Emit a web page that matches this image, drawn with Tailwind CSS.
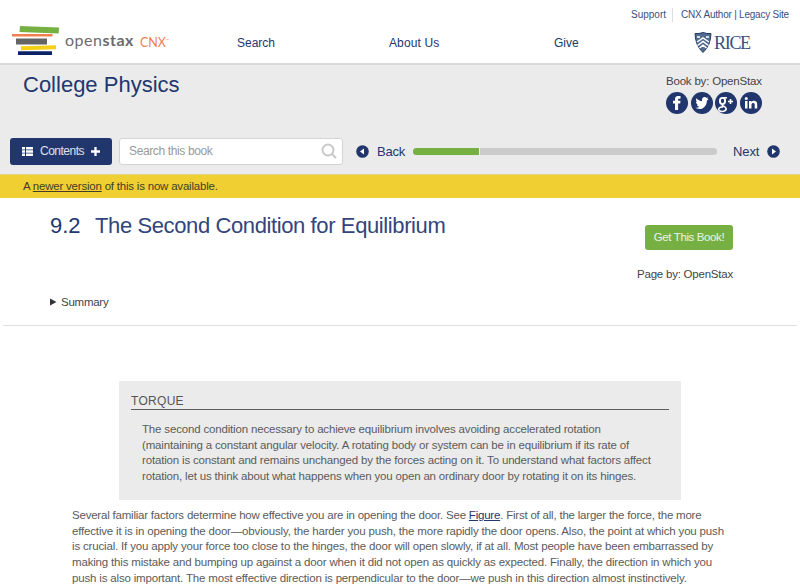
<!DOCTYPE html>
<html lang="en">
<head>
<meta charset="utf-8">
<title>College Physics</title>
<script src="https://cdn.jsdelivr.net/npm/@tailwindcss/browser@4"></script>
</head>
<body class="w-[800px] h-[588px] overflow-hidden bg-white font-['Liberation_Sans',Arial,sans-serif] text-[#444] whitespace-nowrap">
<header class="h-[65px] border-b-2 border-[#d9d9d9] flex">
  <a class="w-[237px] pl-[11px] pt-[25px] flex">
    <svg class="w-[49px] h-[31px]" viewBox="0 0 49 31"><path fill="#76b043" d="M9 1l39 1.500-.3 6L8.500 7z"/><path fill="#f0804f" d="M1 9h40.500v2.500H1z"/><path fill="#646464" d="M5 13.500h31v6H5z"/><path fill="#f4d019" d="M10 21.200l35-1v4l-35 1z"/><path fill="#0b2265" d="M7 26.300h34v3.700H7z"/></svg>
    <span class="font-[Lato,sans-serif] text-[16px] leading-[20px] pt-[5px] pl-[5px] text-[#6b6b6b] tracking-[0.500px]">open<b>stax</b></span>
    <span class="font-[Lato,sans-serif] text-[12.500px] leading-[20px] pt-[6px] pl-[6px] text-[#f0804f]">CNX<span class="text-[4px] align-[5px]">™</span></span>
  </a>
  <nav class="flex w-[394px] text-[12px] leading-[16px] text-[#22376f] pt-[35px]">
    <a class="w-[152px]">Search</a><a class="w-[165px] tracking-[0.120px]">About Us</a><a>Give</a>
  </nav>
  <div class="flex-1 text-[#3d4f80]">
    <div class="flex text-[10px] leading-[14px] pt-[8px]"><a class="w-[42px] border-r border-[#ddd]">Support</a><a class="pl-[8px] tracking-[-0.220px]">CNX Author | Legacy Site</a></div>
    <div class="flex pl-[63px] pt-[10px] items-center">
      <svg class="w-[18px] h-[21px]" viewBox="0 0 18 21"><path d="M1 1.500Q5 2 9 .5q4 1.500 8 1-.3 12-8 19Q1.300 13.500 1 1.500z" fill="#526b8f" stroke="#263e65"/><path d="M3 10l6-4 6 4M3.500 13.500L9 9.500l5.500 4M5.500 16L9 13.200l3.500 2.800" fill="none" stroke="#fff" stroke-width="1.500"/><path d="M3 4h3v2H3zm9 0h3v2h-3z" fill="#d7dfe8"/></svg>
      <span class="font-['Liberation_Serif',serif] text-[18px] leading-[20px] pl-[2px] tracking-[-1.300px] text-[#3a5081]">RICE</span>
    </div>
  </div>
</header>
<section class="h-[109px] bg-[#ebebeb]">
  <div class="flex justify-between h-[72px]">
    <h1 class="pl-[23px] pt-[6px] text-[22px] leading-[28px] text-[#22376f]">College Physics</h1>
    <div class="w-[134px]">
      <p class="text-[11.500px] leading-[14px] pt-[9px] tracking-[-0.200px]">Book by: OpenStax</p>
      <div class="flex gap-[2.500px] pt-[4px]">
        <svg class="w-[22px] h-[22px]" viewBox="0 0 22 22"><circle cx="11" cy="11" r="11" fill="#21366d"/><path fill="#fff" d="M9 18v-6.500H7V8.800h2V7.200C9 4.800 10.200 4 12 4h2.500v2.700H13c-.7 0-.9.300-.9 1v1.100h2.400l-.3 2.700h-2.100V18z"/></svg>
        <svg class="w-[22px] h-[22px]" viewBox="0 0 22 22"><circle cx="11" cy="11" r="11" fill="#21366d"/><path fill="#fff" d="M17.500 7.200l-1.700 1.500c.2 4.500-3 8.300-7.300 8.300-1.500 0-3-.5-4-1.200 1.400.1 2.800-.2 3.900-1.100-1.300-.1-2.200-.9-2.600-2h1.300C5.700 12.300 5 11.200 5 9.800l1.200.3C5 9 4.700 7.700 5.400 6.200 7 8 8.900 9 11.100 9.100 10.500 6.600 12 5 13.700 5c.8 0 1.500.3 2 .9l1.700-.6-1.100 1.500z"/></svg>
        <svg class="w-[22px] h-[22px]" viewBox="0 0 22 22"><circle cx="11" cy="11" r="11" fill="#21366d"/><g fill="none" stroke="#fff"><ellipse cx="7.500" cy="9" rx="2.600" ry="3.100" stroke-width="1.900"/><path stroke-width="1.600" d="M8 5.700h4M8 12.300c-2 1.300.5 1.500 2 2.700 2.500 2.100.5 4.500-2.500 4.500s-4.700-1.400-3.500-3.200c.7-1.200 2.500-1.500 4.200-1.400M15.500 7v5M13 9.500h5"/></g></svg>
        <svg class="w-[22px] h-[22px]" viewBox="0 0 22 22"><circle cx="11" cy="11" r="11" fill="#21366d"/><path fill="#fff" d="M5 9h2.500v7.500H5zM9 9h2.400v1c1.300-2 5.800-1.800 5.800 2v4.500h-2.500v-4c0-2.100-3.200-2.100-3.200 0v4H9z"/><circle cx="6.250" cy="6.500" r="1.500" fill="#fff"/></svg>
      </div>
    </div>
  </div>
  <div class="flex items-center h-[28px] pl-[10px]">
    <button class="w-[102px] h-[27px] shrink-0 rounded-[3px] bg-[#21366d] text-white/85 text-[12px] flex items-center">
      <svg class="w-[11px] h-[9px] ml-[12px] mr-[7px] shrink-0" viewBox="0 0 11 9"><path fill="#fff" d="M0 0h3v2.400H0zm4 0h7v2.400H4zM0 3.300h3v2.400H0zm4 0h7v2.400H4zM0 6.600h3V9H0zm4 0h7V9H4z"/></svg>
      <span class="w-[51px] shrink-0 text-left tracking-[-0.500px]">Contents</span>
      <svg class="w-[9px] h-[9px] shrink-0" viewBox="0 0 9 9"><path stroke="#fff" stroke-width="2.300" d="M4.500 0v9M0 4.500h9"/></svg>
    </button>
    <div class="ml-[7px] w-[224px] h-[27px] shrink-0 rounded-[3px] border border-[#d4d4d4] bg-white flex items-center justify-between pl-[9px] pr-[5px] text-[12px] text-[#999]"><span class="tracking-[-0.370px]">Search this book</span><svg class="w-[16px] h-[16px]" viewBox="0 0 16 16" fill="none" stroke="#c8c8c8" stroke-width="2"><circle cx="7" cy="7" r="5.500"/><path d="M11 11l4 4"/></svg></div>
    <svg class="w-[13px] h-[13px] ml-[13px] shrink-0" viewBox="0 0 13 13"><circle cx="6.500" cy="6.500" r="6.300" fill="#21366d"/><path fill="#fff" d="M8 3.500v6l-4-3z"/></svg>
    <span class="w-[44px] shrink-0 pl-[8px] pt-[2px] text-[13px] text-[#22376f] tracking-[-0.250px]">Back</span>
    <div class="w-[304px] shrink-0 h-[7px] rounded-full bg-[#cbcbcb] overflow-hidden mt-[1px]"><div class="w-[67px] h-full bg-[#76b043] border-r border-[#eee]"></div></div>
    <span class="w-[50px] shrink-0 pl-[16px] pt-[2px] text-[13px] text-[#22376f] tracking-[-0.100px]">Next</span>
    <svg class="w-[13px] h-[13px] shrink-0" viewBox="0 0 13 13"><circle cx="6.500" cy="6.500" r="6.300" fill="#21366d"/><path fill="#fff" d="M5 3.500v6l4-3z"/></svg>
  </div>
</section>
<div class="h-[24px] bg-[#f0cf33] border-t border-[#e5d382] pl-[23px] text-[11.500px] leading-[23px] text-[#443e27] tracking-[-0.210px]">A <a class="underline">newer version</a> of this is now available.</div>
<section class="h-[128px] mx-[3px] border-b border-[#ddd] pl-[47px] pr-[64px] flex justify-between">
  <div>
    <h2 class="pt-[13px] text-[22px] leading-[30px] text-[#32457c] flex"><span class="w-[45px] text-[#22376f]">9.2</span><span class="tracking-[-0.390px]">The Second Condition for Equilibrium</span></h2>
    <p class="pt-[53px] text-[11.500px] tracking-[-0.250px] leading-[16px] flex items-center"><svg class="w-[7px] h-[8px] mr-[4px]" viewBox="0 0 7 8"><path fill="#333" d="M0 .5l6.500 3.500L0 7.500z"/></svg>Summary</p>
  </div>
  <div class="flex flex-col items-end pt-[27px]">
    <button class="w-[88px] h-[25px] rounded-[3px] bg-[#76b043] text-white/85 text-[11.500px] tracking-[-0.380px]">Get This Book!</button>
    <p class="pt-[17px] text-[11.500px] leading-[14px] tracking-[-0.220px]">Page by: OpenStax</p>
  </div>
</section>
<section class="mt-[55px] ml-[119px] w-[562px] h-[119px] bg-[#ebebeb] px-[12px] pt-[12px]">
  <h3 class="h-[17px] border-b border-[#5d5d5d] text-[12px] leading-[17px] tracking-[0.300px] text-[#555]">TORQUE</h3>
  <p class="pt-[12px] pl-[11px] text-[11.500px] tracking-[-0.170px] leading-[15.700px] text-[#5b5b5b]">The second condition necessary to achieve equilibrium involves avoiding accelerated rotation<br>(maintaining a constant angular velocity. A rotating body or system can be in equilibrium if its rate of<br>rotation is constant and remains unchanged by the forces acting on it. To understand what factors affect<br>rotation, let us think about what happens when you open an ordinary door by rotating it on its hinges.</p>
</section>
<p class="pt-[8px] pl-[72px] text-[11.500px] tracking-[-0.170px] leading-[15.700px] text-[#5b5b5b]"><span class="tracking-[-0.210px]">Several familiar factors determine how effective you are in opening the door. See <a class="underline text-[#22376f]">Figure</a>. First of all, the larger the force, the more</span><br>effective it is in opening the door—obviously, the harder you push, the more rapidly the door opens. Also, the point at which you push<br>is crucial. If you apply your force too close to the hinges, the door will open slowly, if at all. Most people have been embarrassed by<br>making this mistake and bumping up against a door when it did not open as quickly as expected. Finally, the direction in which you<br>push is also important. The most effective direction is perpendicular to the door—we push in this direction almost instinctively.</p>
</body>
</html>
